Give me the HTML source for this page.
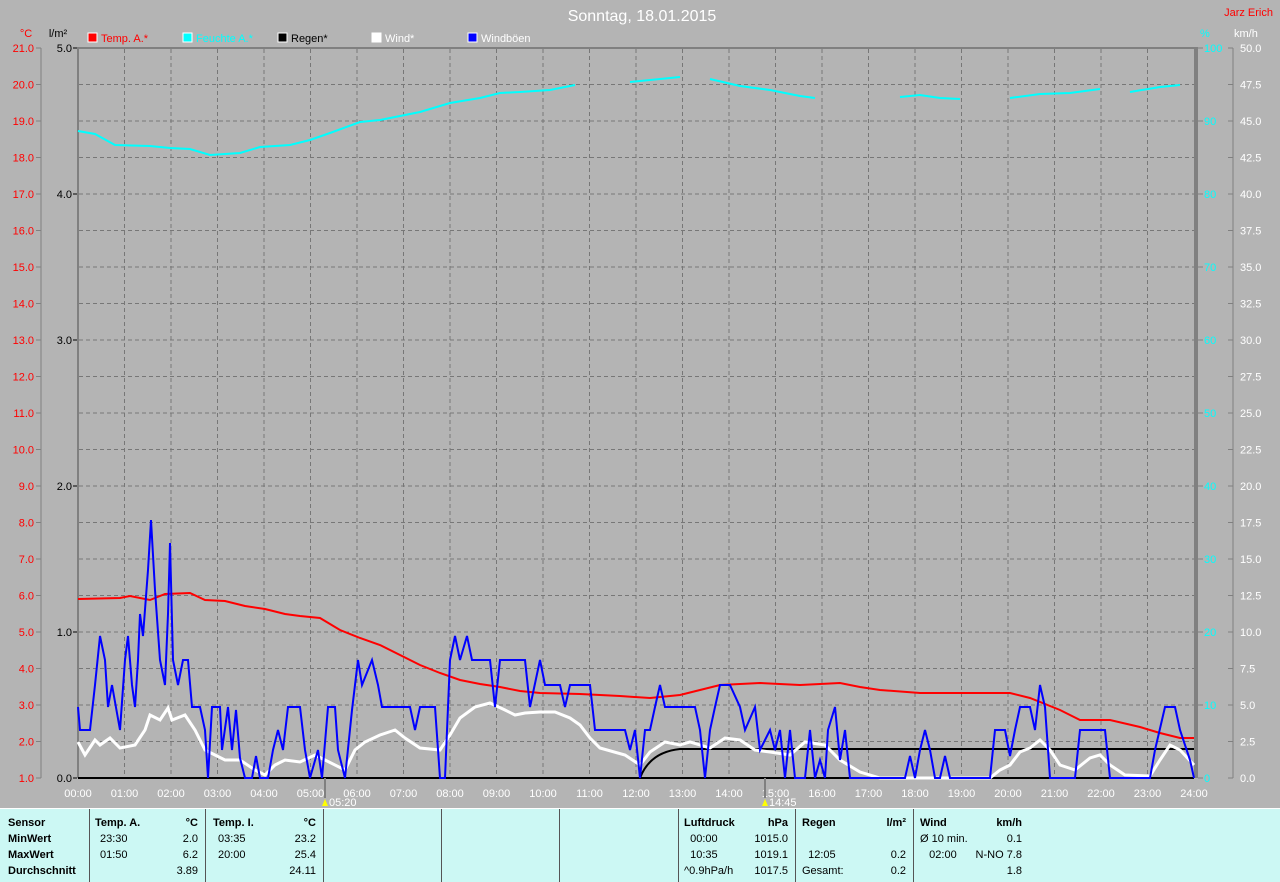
<!DOCTYPE html>
<html><head><meta charset="utf-8"><style>
body{margin:0;background:#b4b4b4;width:1280px;height:881px;overflow:hidden;font-family:"Liberation Sans",sans-serif}
svg{position:absolute;left:0;top:0}
#tbl{position:absolute;left:0;top:808px;width:1280px;height:73px;background:#ccf8f4;border-top:1px solid #fff}
.c{position:absolute;top:0;height:73px;border-left:1px solid #555}
.t{position:absolute;font-size:11px;color:#000;line-height:16px}
.b{font-weight:bold}
</style></head><body>
<svg width="1280" height="808" font-family="Liberation Sans, sans-serif" font-size="11">
<text x="642" y="21" fill="#fff" font-size="16" text-anchor="middle">Sonntag, 18.01.2015</text>
<text x="1273" y="16" fill="#f00" text-anchor="end">Jarz Erich</text>
<text x="26" y="37" fill="#f00" text-anchor="middle">°C</text>
<text x="58" y="37" fill="#000" text-anchor="middle">l/m²</text>
<text x="1200" y="37" fill="#0ff">%</text>
<text x="1234" y="37" fill="#fff">km/h</text>
<g stroke="#fff" stroke-width="1">
<rect x="88" y="33" width="9" height="9" fill="#f00"/><rect x="183" y="33" width="9" height="9" fill="#0ff"/><rect x="278" y="33" width="9" height="9" fill="#000"/><rect x="372" y="33" width="9" height="9" fill="#fff"/><rect x="468" y="33" width="9" height="9" fill="#00f"/></g>
<text x="101" y="42" fill="#f00">Temp. A.*</text><text x="196" y="42" fill="#0ff">Feuchte A.*</text><text x="291" y="42" fill="#000">Regen*</text><text x="385" y="42" fill="#fff">Wind*</text><text x="481" y="42" fill="#fff">Windböen</text>
<g stroke="#777" stroke-dasharray="4,3" stroke-width="1" id="grid"></g>
<g id="axes"></g>
<rect x="77" y="47" width="2" height="731" fill="#808080"/>
<rect x="77" y="47" width="1121" height="2" fill="#808080"/>
<rect x="1194" y="47" width="4" height="731" fill="#808080"/>
<line x1="41" y1="48" x2="41" y2="778" stroke="#808080"/>
<line x1="1233" y1="48" x2="1233" y2="778" stroke="#808080"/>
<polyline fill="none" stroke="#0ff" stroke-width="2" points="78,131 95,134 115,145 150,146 170,148 190,149 210,155 240,153 260,147 290,145 310,140 330,133 360,122 380,120 400,116 420,112 450,103 480,98 500,93 520,92 550,90 575,85"/>
<polyline fill="none" stroke="#0ff" stroke-width="2" points="630,82 660,79 680,77"/>
<polyline fill="none" stroke="#0ff" stroke-width="2" points="710,79 740,86 770,90 800,96 815,98"/>
<polyline fill="none" stroke="#0ff" stroke-width="2" points="900,97 920,95 940,98 960,99"/>
<polyline fill="none" stroke="#0ff" stroke-width="2" points="1010,98 1040,94 1070,93 1100,89"/>
<polyline fill="none" stroke="#0ff" stroke-width="2" points="1130,92 1160,87 1180,85"/>
<line x1="78" y1="778" x2="1194" y2="778" stroke="#000" stroke-width="2"/>
<path d="M640,778 Q650,752 680,749 L1194,749" fill="none" stroke="#000" stroke-width="2"/>
<polyline fill="none" stroke="#f00" stroke-width="2" points="78,599 120,598 130,596 150,600 165,594 190,593 205,600 225,601 245,606 265,609 285,614 300,616 320,618 340,630 360,638 380,645 400,655 420,665 440,673 460,680 480,684 500,687 520,691 540,693 580,694 620,696 650,698 680,695 700,690 720,685 760,683 800,685 840,683 860,687 880,690 920,693 1010,693 1030,698 1060,710 1080,720 1110,720 1140,727 1160,733 1180,738 1194,738"/>
<polyline fill="none" stroke="#fff" stroke-width="3" points="78,742 85,755 95,740 100,745 110,738 120,748 135,745 145,730 150,715 160,720 168,708 172,720 185,715 195,730 205,750 215,755 225,760 240,760 255,770 265,775 275,765 285,760 300,762 315,755 325,760 345,770 355,750 365,742 380,735 395,730 405,738 420,748 440,750 450,735 460,718 475,707 490,703 505,710 515,715 525,713 540,712 555,712 570,718 580,725 590,738 600,748 625,755 640,765 650,752 665,742 680,745 690,742 710,748 725,738 740,740 755,750 770,752 790,755 805,742 825,745 840,760 860,772 880,778 990,778 1000,770 1010,765 1020,752 1030,748 1040,740 1050,750 1060,765 1075,770 1090,758 1100,755 1110,765 1125,775 1150,776 1160,760 1170,745 1180,750 1194,765"/>
<polyline fill="none" stroke="#00f" stroke-width="2" points="78,707 80,730 90,730 95,685 100,636 105,660 108,707 112,685 120,730 125,660 128,636 132,685 135,707 138,660 140,614 143,636 148,570 151,520 155,590 160,660 165,685 168,614 170,543 173,660 178,685 183,660 188,660 192,707 200,707 205,730 208,778 212,707 220,707 222,750 228,707 232,750 236,710 240,758 245,778 252,778 256,756 260,778 268,778 273,750 278,730 283,750 288,707 300,707 305,750 310,778 318,750 322,778 328,707 335,707 338,750 345,778 352,710 358,660 362,685 372,660 378,685 382,707 410,707 415,730 420,707 435,707 440,778 445,778 448,707 450,660 455,636 460,660 467,636 472,660 490,660 495,707 500,660 525,660 530,707 540,660 545,685 560,685 565,707 570,685 590,685 595,730 625,730 630,750 635,730 640,778 645,730 650,730 655,707 660,685 665,707 695,707 700,730 705,778 710,730 715,707 720,685 730,685 740,707 745,730 755,707 760,750 770,730 775,750 780,730 785,778 790,730 795,778 805,778 810,730 815,778 820,760 825,778 828,730 835,707 840,760 845,730 850,778 905,778 910,756 915,778 920,750 925,730 930,750 935,778 940,778 945,756 950,778 990,778 995,730 1005,730 1010,756 1015,730 1020,707 1030,707 1035,730 1040,685 1045,707 1050,778 1075,778 1080,730 1105,730 1110,778 1150,778 1155,750 1165,707 1175,707 1180,730 1190,760 1194,778"/>
<line x1="325" y1="778" x2="325" y2="798" stroke="#808080" stroke-width="2"/>
<line x1="765" y1="778" x2="765" y2="798" stroke="#808080" stroke-width="2"/>
<polygon points="322,806 328,806 325,799" fill="#ff0"/><text x="329" y="806" fill="#fff">05:20</text>
<polygon points="762,806 768,806 765,799" fill="#ff0"/><text x="769" y="806" fill="#fff">14:45</text>
</svg>
<div id="tbl">
<div class="c" style="left:89px"></div><div class="c" style="left:205px"></div><div class="c" style="left:323px"></div><div class="c" style="left:441px"></div><div class="c" style="left:559px"></div><div class="c" style="left:678px"></div><div class="c" style="left:795px"></div><div class="c" style="left:913px"></div>
<div class="t b" style="left:8px;top:6px">Sensor<br>MinWert<br>MaxWert<br>Durchschnitt</div>
<div class="t b" style="left:95px;top:6px">Temp. A.</div><div class="t" style="left:100px;top:22px">23:30<br>01:50</div>
<div class="t" style="left:150px;top:6px;width:48px;text-align:right"><b>°C</b><br>2.0<br>6.2<br>3.89</div>
<div class="t b" style="left:213px;top:6px">Temp. I.</div><div class="t" style="left:218px;top:22px">03:35<br>20:00</div>
<div class="t" style="left:268px;top:6px;width:48px;text-align:right"><b>°C</b><br>23.2<br>25.4<br>24.11</div>
<div class="t b" style="left:684px;top:6px">Luftdruck</div><div class="t" style="left:684px;top:22px">&nbsp;&nbsp;00:00<br>&nbsp;&nbsp;10:35<br>^0.9hPa/h</div>
<div class="t" style="left:740px;top:6px;width:48px;text-align:right"><b>hPa</b><br>1015.0<br>1019.1<br>1017.5</div>
<div class="t b" style="left:802px;top:6px">Regen</div><div class="t" style="left:802px;top:38px">&nbsp;&nbsp;12:05<br>Gesamt:</div>
<div class="t" style="left:860px;top:6px;width:46px;text-align:right"><b>l/m²</b><br>&nbsp;<br>0.2<br>0.2</div>
<div class="t b" style="left:920px;top:6px">Wind</div><div class="t" style="left:920px;top:22px">Ø 10 min.<br>&nbsp;&nbsp;&nbsp;02:00</div>
<div class="t" style="left:962px;top:6px;width:60px;text-align:right"><b>km/h</b><br>0.1<br>N-NO 7.8<br>1.8</div>
</div>
<script>
var ns="http://www.w3.org/2000/svg",g=document.getElementById('grid'),a=document.getElementById('axes');
function el(p,t,at,tx){var e=document.createElementNS(ns,t);for(var k in at)e.setAttribute(k,at[k]);if(tx)e.textContent=tx;p.appendChild(e);}
for(var h=1;h<24;h++){var x=78+h*46.5;el(g,'line',{x1:x,y1:49,x2:x,y2:778});}
for(var i=1;i<20;i++){var y=48+i*36.5;el(g,'line',{x1:79,y1:y,x2:1194,y2:y});}
for(var h=0;h<=24;h++){var x=78+h*46.5;el(a,'text',{x:x,y:797,fill:'#fff','text-anchor':'middle'},(h<10?'0':'')+h+':00');}
for(var i=0;i<=20;i++){var y=48+i*36.5;el(a,'text',{x:34,y:y+4,fill:'#f00','text-anchor':'end'},(21-i).toFixed(1));el(a,'line',{x1:36,y1:y,x2:41,y2:y,stroke:'#808080'});
el(a,'text',{x:1240,y:y+4,fill:'#fff'},(50-i*2.5).toFixed(1));el(a,'line',{x1:1228,y1:y,x2:1233,y2:y,stroke:'#808080'});}
for(var i=0;i<=5;i++){var y=48+i*146;el(a,'text',{x:72,y:y+4,fill:'#000','text-anchor':'end'},(5-i).toFixed(1));el(a,'line',{x1:73,y1:y,x2:77,y2:y,stroke:'#000'});}
for(var i=0;i<=10;i++){var y=48+i*73;el(a,'text',{x:1204,y:y+4,fill:'#0ff'},String(100-i*10));el(a,'line',{x1:1198,y1:y,x2:1203,y2:y,stroke:'#808080'});}
</script>
</body></html>
